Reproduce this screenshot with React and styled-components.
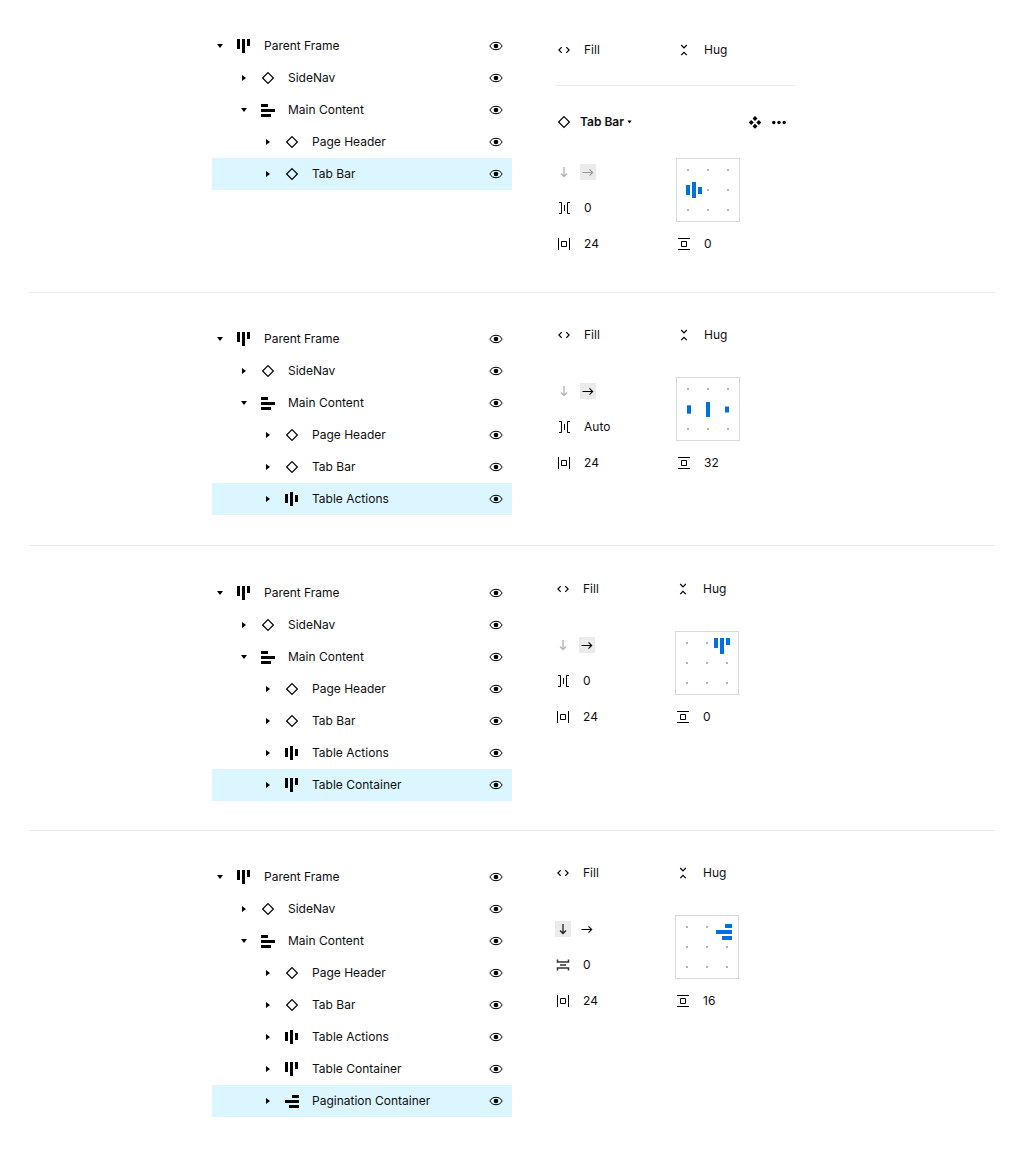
import React from "react";
import styled, { createGlobalStyle } from "styled-components";

const GlobalStyle = createGlobalStyle`
  * { box-sizing: border-box; }
  body {
    margin: 0;
    background: #fff;
    color: #0d0d0d;
    font-family: Inter, "Liberation Sans", sans-serif;
    font-size: 12px;
    line-height: 16px;
    letter-spacing: 0;
  }
`;

const Page = styled.main`
  width: 1024px;
  padding: 0 29px;
`;

const Section = styled.section`
  display: flex;
  align-items: flex-start;
  gap: ${(p) => p.$gap}px;
  width: 966px;
  height: ${(p) => p.$height}px;
  padding-left: 183px;
  border-bottom: ${(p) => (p.$last ? "none" : "1px solid #ebebeb")};
`;

const Tree = styled.ul`
  list-style: none;
  width: 300px;
  margin: ${(p) => p.$top}px 0 0;
  padding: 0;
`;

const TreeRow = styled.li`
  display: flex;
  align-items: center;
  height: 32px;
  padding: 0 8px 0 ${(p) => p.$depth * 24}px;
  background: ${(p) => (p.$selected ? "#dcf6ff" : "transparent")};
`;

const LayerName = styled.span`
  flex: 1;
  margin-left: 12px;
  white-space: nowrap;
`;

const Svg = styled.svg`
  display: block;
  flex: none;
  width: 16px;
  height: 16px;
  color: ${(p) => p.$color || "#000"};
  background: ${(p) => (p.$active ? "#ebebeb" : "transparent")};
  margin-left: ${(p) => p.$space || 0}px;
`;

const Panel = styled.div`
  width: 240px;
  margin-top: ${(p) => p.$top}px;
`;

const SizeRow = styled.div`
  display: grid;
  grid-template-columns: 120px 120px;
  height: 32px;
`;

const Field = styled.div`
  display: flex;
  align-items: center;
  gap: 12px;
`;

const ComponentHeader = styled.div`
  display: flex;
  align-items: center;
  width: 240px;
  height: 53px;
  margin: 19px 0 -6px -1px;
  padding: 20px 8px 0 1px;
  border-top: 1px solid #ebebeb;
`;

const ComponentName = styled.strong`
  margin-left: 8px;
  font-weight: 600;
`;

const NameCaret = styled.svg`
  display: block;
  width: 5px;
  height: 4px;
  margin: 0 auto 0 3px;
`;

const AutoLayout = styled.div`
  display: grid;
  grid-template-columns: 120px 120px;
  grid-template-rows: repeat(3, 36px);
  margin-top: 22px;
`;

const Direction = styled.div`
  display: flex;
  align-items: center;
  gap: 8px;
`;

const AlignBox = styled.svg`
  display: block;
  grid-column: 2;
  grid-row: 1 / span 2;
  align-self: center;
  width: 64px;
  height: 64px;
`;

const Icon = ({ children, ...rest }) => (
  <Svg viewBox="0 0 16 16" fill="currentColor" {...rest}>{children}</Svg>
);
const Stroke = ({ d, width = 1, ...rest }) => (
  <Icon {...rest}><path d={d} fill="none" stroke="currentColor" strokeWidth={width} /></Icon>
);

const Caret = ({ open }) => (
  <Icon><path d={open ? "M5 6h6l-3 4z" : "M6 5v6l4-3z"} /></Icon>
);
const Diamond = (props) => <Stroke width={1.2} d="M8 2.6 13.4 8 8 13.4 2.6 8z" {...props} />;

const BARS = {
  top: [[1, 1, 3, 10], [6, 1, 3, 14], [11, 1, 3, 7]],
  middle: [[1, 3, 3, 9], [6, 1, 3, 14], [11, 4, 3, 7]],
  left: [[1, 2, 7, 3], [1, 7, 14, 3], [1, 12, 10, 3]],
  right: [[8, 2, 7, 3], [1, 7, 14, 3], [5, 12, 10, 3]],
};

const Rects = ({ items }) =>
  items.map(([x, y, w, h]) => <rect key={`${x}-${y}`} x={x} y={y} width={w} height={h} />);

const LayerIcon = ({ kind }) =>
  kind === "component" ? <Diamond $space={8} /> : <Icon $space={8}><Rects items={BARS[kind]} /></Icon>;

const Eye = () => (
  <Icon>
    <path d="M1.9 8C3 5.6 5.3 4.3 8 4.3S13 5.6 14.1 8C13 10.4 10.7 11.7 8 11.7S3 10.4 1.9 8z" fill="none" stroke="currentColor" />
    <circle cx="8" cy="8" r="2.3" />
  </Icon>
);

const FillIcon = () => <Stroke width={1.2} d="M5.7 5.2 2.9 8 5.7 10.8M10.3 5.2 13.1 8 10.3 10.800" />;
const HugIcon = () => <Stroke width={1.2} d="M5.2 3 8 5.8 10.8 3M5.2 13.2 8 10.4 10.8 13.2" />;
const GapIcon = ({ vertical }) =>
  vertical ? (
    <Stroke width={1.5} $color="#333" d="M2.500 2.500V5H13.500V2.500M2.500 13.500V11H13.500V13.500M5 8H11" />
  ) : (
    <Stroke d="M3 2.500H5.500V13.500H3M14 2.500H11.500V13.500H14M8.500 5V11" />
  );
const PaddingX = () => <Stroke d="M2.500 2V14M13.500 2V14M5.500 5.500H10.500V10.500H5.500z" />;
const PaddingY = () => <Stroke d="M2 2.500H14M2 13.500H14M5.500 5.500H10.500V10.500H5.500z" />;
const DownArrow = (props) => <Stroke width={1.3} d="M8 3V12.500M5 9.500 8 12.500 11 9.500" {...props} />;
const RightArrow = (props) => <Stroke width={1.1} d="M2.500 8.500H12.700M9.500 5.300 12.700 8.500 9.500 11.700" {...props} />;

const ComponentIcon = () => (
  <Icon>
    <path d="M8 2.100 10.500 4.600 8 7.100 5.500 4.600zM8 9.700 10.500 12.200 8 14.700 5.500 12.200zM4.200 5.900 6.700 8.400 4.200 10.900 1.700 8.400zM11.800 5.900 14.300 8.400 11.800 10.900 9.300 8.400z" />
  </Icon>
);
const MoreIcon = () => (
  <Icon $space={8}>
    <circle cx="2.800" cy="8.500" r="1.700" />
    <circle cx="8" cy="8.500" r="1.700" />
    <circle cx="13.200" cy="8.500" r="1.700" />
  </Icon>
);

const STEPS = [11, 31, 51];

const Alignment = ({ bars, hidden }) => (
  <AlignBox viewBox="0 0 64 64">
    <rect x="0.5" y="0.5" width="63" height="63" fill="none" stroke="#d9d9d9" />
    <g fill="#b3b3b3">
      {STEPS.flatMap((y, r) =>
        STEPS.map((x, c) =>
          hidden.includes(r * 3 + c) ? null : <rect key={`${r}${c}`} x={x} y={y} width="2" height="2" />
        )
      )}
    </g>
    <g fill="#0070e0"><Rects items={bars} /></g>
  </AlignBox>
);

const LAYERS = [
  { name: "Parent Frame", depth: 0, kind: "top", open: true },
  { name: "SideNav", depth: 1, kind: "component" },
  { name: "Main Content", depth: 1, kind: "left", open: true },
  { name: "Page Header", depth: 2, kind: "component" },
  { name: "Tab Bar", depth: 2, kind: "component" },
  { name: "Table Actions", depth: 2, kind: "middle" },
  { name: "Table Container", depth: 2, kind: "top" },
  { name: "Pagination Container", depth: 2, kind: "right" },
];

const SECTIONS = [
  {
    count: 5, height: 293, gap: 44, treeTop: 30, panelTop: 34,
    component: "Tab Bar", muted: true, direction: "row", spacing: "0", px: "24", py: "0",
    bars: [[10, 27, 4, 10], [16, 24, 4, 16], [22, 29, 4, 7]], hidden: [3],
  },
  {
    count: 6, height: 253, gap: 44, treeTop: 30, panelTop: 26,
    direction: "row", spacing: "Auto", px: "24", py: "32",
    bars: [[11, 28.3, 4, 8.4], [30, 25, 4, 15], [49, 29.5, 4, 6]], hidden: [3, 4, 5],
  },
  {
    count: 7, height: 285, gap: 43, treeTop: 31, panelTop: 27,
    direction: "row", spacing: "0", px: "24", py: "0",
    bars: [[39, 7, 4, 10], [45, 7, 4, 16], [51, 7, 4, 7]], hidden: [2],
  },
  {
    count: 8, height: 323, gap: 43, treeTop: 30, panelTop: 26,
    direction: "column", spacing: "0", px: "24", py: "16",
    bars: [[50, 9, 7, 4], [41, 15, 16, 4], [47, 21, 10, 4]], hidden: [2],
  },
];

const LayerTree = ({ count, top }) => (
  <Tree $top={top}>
    {LAYERS.slice(0, count).map((layer, i) => (
      <TreeRow key={layer.name} $depth={layer.depth} $selected={i === count - 1}>
        <Caret open={layer.open} />
        <LayerIcon kind={layer.kind} />
        <LayerName>{layer.name}</LayerName>
        <Eye />
      </TreeRow>
    ))}
  </Tree>
);

const Inspector = ({ s }) => {
  const column = s.direction === "column";
  return (
    <Panel $top={s.panelTop}>
      <SizeRow>
        <Field><FillIcon />Fill</Field>
        <Field><HugIcon />Hug</Field>
      </SizeRow>
      {s.component && (
        <ComponentHeader>
          <Diamond />
          <ComponentName>{s.component}</ComponentName>
          <NameCaret viewBox="0 0 5 4"><path d="M0.500 0.500h4l-2 3z" /></NameCaret>
          <ComponentIcon />
          <MoreIcon />
        </ComponentHeader>
      )}
      <AutoLayout>
        <Direction>
          <DownArrow $active={column} $color={column ? "#222" : "#b3b3b3"} />
          <RightArrow $active={!column} $color={s.muted ? "#999" : "#000"} />
        </Direction>
        <Alignment bars={s.bars} hidden={s.hidden} />
        <Field><GapIcon vertical={column} />{s.spacing}</Field>
        <Field><PaddingX />{s.px}</Field>
        <Field><PaddingY />{s.py}</Field>
      </AutoLayout>
    </Panel>
  );
};

export default function App() {
  return (
    <>
      <GlobalStyle />
      <Page>
        {SECTIONS.map((s, i) => (
          <Section key={s.count} $height={s.height} $gap={s.gap} $last={i === SECTIONS.length - 1}>
            <LayerTree count={s.count} top={s.treeTop} />
            <Inspector s={s} />
          </Section>
        ))}
      </Page>
    </>
  );
}
